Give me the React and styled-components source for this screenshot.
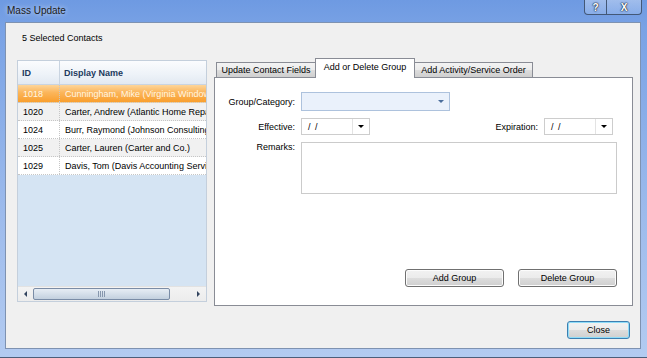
import React from 'react'
import styled, { createGlobalStyle } from 'styled-components'

const Global = createGlobalStyle`
  html, body { margin:0; padding:0; }
  body {
    width:647px;
    height:358px;
    overflow:hidden;
    font-family:"Liberation Sans", Arial, sans-serif;
    font-size:9px;
    color:#000;
  }
`

const Frame = styled.div`
  width:647px;
  height:358px;
  box-sizing:border-box;
  display:flex;
  flex-direction:column;
  padding:0 6px 8px 5px;
  background:linear-gradient(180deg, #6e9ae2 0%, #79a2e5 8%, #9dbbec 60%, #b3cbf1 100%);
  border-bottom:1px solid #4c5e7a;
`

const TitleBar = styled.div`
  height:22px;
  display:flex;
  justify-content:space-between;
  align-items:flex-start;
  flex-shrink:0;
`

const Title = styled.div`
  padding:5px 0 0 2px;
  font-size:10px;
  line-height:12px;
  color:#1b1b1b;
  text-shadow:0 0 5px rgba(255,255,255,0.8);
`

const Captions = styled.div`
  display:flex;
  margin-right:-1px;
`

const CaptionBtn = styled.div`
  width:${p => p.$w}px;
  height:15px;
  box-sizing:border-box;
  border:1px solid #435877;
  border-top:none;
  border-left:${p => (p.$first ? '1px solid #435877' : 'none')};
  border-radius:${p => (p.$first ? '0 0 0 4px' : '0 0 4px 0')};
  background:linear-gradient(180deg, rgba(255,255,255,0.35), rgba(200,220,250,0.25));
  display:flex;
  align-items:center;
  justify-content:center;
  color:#fff;
  font-weight:bold;
  font-size:10px;
  text-shadow:0 0 1px #1e2b40, 0 0 1px #1e2b40, 0 0 2px #1e2b40;
`

const Client = styled.div`
  flex:1;
  display:flex;
  flex-direction:column;
  box-sizing:border-box;
  background:#f0f0f0;
  border:1px solid #7e92b1;
  padding:9px 7px 0 11px;
`

const Heading = styled.div`
  line-height:12px;
  margin-bottom:14px;
  padding-left:5px;
`

const MainRow = styled.div`
  display:flex;
  align-items:flex-start;
  gap:7px;
`

const ListBox = styled.div`
  width:190px;
  height:242px;
  margin-top:2px;
  box-sizing:border-box;
  border:1px solid #c4cfdc;
  background:#d5e4f3;
  display:flex;
  flex-direction:column;
  overflow:hidden;
`

const HeaderRow = styled.div`
  display:grid;
  grid-template-columns:42px 1fr;
  height:23px;
  background:linear-gradient(180deg, #fbfcfe 0%, #edf2f8 60%, #e2e9f2 100%);
  border-bottom:1px solid #c9d4e1;
  flex-shrink:0;
`

const HeadCell = styled.div`
  display:flex;
  align-items:center;
  padding-left:4px;
  font-weight:bold;
  color:#223a5e;
  border-right:${p => (p.$divider ? '1px solid #c9d4e1' : 'none')};
`

const Row = styled.div`
  display:grid;
  grid-template-columns:42px 1fr;
  height:18px;
  box-sizing:border-box;
  border-bottom:1px dotted #c6c6c6;
  background:${p =>
    p.$selected
      ? 'linear-gradient(180deg, #fdd59a 0%, #fbb55a 45%, #f99f2e 100%)'
      : p.$alt
      ? '#f1f1f1'
      : '#ffffff'};
  color:${p => (p.$selected ? '#fff6e4' : '#000')};
`

const Cell = styled.div`
  display:flex;
  align-items:center;
  padding-left:5px;
  white-space:nowrap;
  overflow:hidden;
  border-right:${p => (p.$divider ? '1px dotted #c6c6c6' : 'none')};
`

const HScroll = styled.div`
  margin-top:auto;
  height:14px;
  display:flex;
  align-items:center;
  background:linear-gradient(180deg, #f3f3f3, #ececec);
  border-top:1px solid #e2e2e2;
  flex-shrink:0;
`

const ArrowBtn = styled.div`
  width:15px;
  height:100%;
  display:flex;
  align-items:center;
  justify-content:center;
  flex-shrink:0;
`

const Track = styled.div`
  flex:1;
  height:100%;
  display:flex;
  align-items:center;
`

const Thumb = styled.div`
  width:137px;
  height:12px;
  box-sizing:border-box;
  border:1px solid #7a8ca6;
  border-radius:2px;
  background:linear-gradient(180deg, #e7edf4 0%, #d5dfea 50%, #c3d0de 100%);
  display:flex;
  align-items:center;
  justify-content:center;
`

const Grip = styled.div`
  width:7px;
  height:6px;
  background:repeating-linear-gradient(90deg, #8797ad 0 1px, transparent 1px 2px);
`

const TabArea = styled.div`
  width:419px;
  display:flex;
  flex-direction:column;
`

const TabStrip = styled.div`
  height:19px;
  display:flex;
  align-items:flex-end;
  padding-left:2px;
`

const Tab = styled.div`
  position:relative;
  z-index:${p => (p.$active ? 2 : 1)};
  box-sizing:border-box;
  height:${p => (p.$active ? '20px' : '15px')};
  margin-bottom:${p => (p.$active ? '-1px' : '0')};
  margin-left:${p => (p.$first ? '0' : '-1px')};
  width:${p => p.$w}px;
  display:flex;
  align-items:center;
  justify-content:center;
  border:1px solid #898c95;
  border-bottom:none;
  background:${p =>
    p.$active
      ? '#ffffff'
      : 'linear-gradient(180deg, #f3f3f3 0%, #ebebeb 50%, #dddddd 51%, #cfcfcf 100%)'};
  padding-bottom:${p => (p.$active ? '3px' : '0')};
  white-space:nowrap;
`

const Panel = styled.div`
  height:229px;
  box-sizing:border-box;
  border:1px solid #898c95;
  background:#fff;
  display:flex;
  flex-direction:column;
  padding:14px 15px 18px 0;
`

const FormRow = styled.div`
  display:flex;
  align-items:${p => (p.$top ? 'flex-start' : 'center')};
  margin-top:${p => p.$mt || 0}px;
  padding-right:${p => p.$pr || 0}px;
`

const Label = styled.div`
  width:${p => p.$w || 80}px;
  text-align:right;
  margin-right:6px;
  flex-shrink:0;
`

const Combo = styled.div`
  width:149px;
  height:19px;
  box-sizing:border-box;
  border:1px solid #adc2dd;
  background:#eaf1fb;
  display:flex;
  align-items:center;
  justify-content:flex-end;
  padding-right:5px;
`

const DateBox = styled.div`
  width:69px;
  height:17px;
  box-sizing:border-box;
  border:1px solid #cdcdcd;
  display:flex;
  background:#fff;
`

const DateText = styled.div`
  flex:1;
  display:flex;
  align-items:center;
  padding-left:6px;
  letter-spacing:1px;
  border-right:1px solid #e3e3e3;
`

const DateBtn = styled.div`
  width:16px;
  display:flex;
  align-items:center;
  justify-content:center;
`

const Spacer = styled.div`
  flex:1;
`

const Remarks = styled.div`
  width:316px;
  height:52px;
  box-sizing:border-box;
  border:1px solid #cbcbcb;
  background:#fff;
`

const ButtonRow = styled.div`
  display:flex;
  justify-content:flex-end;
  gap:14px;
`

const Button = styled.button`
  width:${p => p.$w || 99}px;
  height:18px;
  box-sizing:border-box;
  padding:0;
  font-family:inherit;
  font-size:9px;
  color:#000;
  border:1px solid ${p => (p.$focus ? '#3c7fb1' : '#707070')};
  border-radius:3px;
  background:linear-gradient(180deg, #f2f2f2 0%, #ebebeb 50%, #dddddd 51%, #cfcfcf 100%);
  box-shadow:${p => (p.$focus ? 'inset 0 0 0 1px #8fdcf8' : 'inset 0 0 0 1px #fcfcfc')};
`

const Footer = styled.div`
  display:flex;
  justify-content:flex-end;
  margin-top:15px;
  padding-right:3px;
`

const Tri = ({ dir = 'down', color = '#000', size = 3 }) => {
  const s = size
  const pts =
    dir === 'down'
      ? `0,0 ${s * 2},0 ${s},${s}`
      : dir === 'left'
      ? `${s},0 ${s},${s * 2} 0,${s}`
      : `0,0 0,${s * 2} ${s},${s}`
  const w = dir === 'down' ? s * 2 : s
  const h = dir === 'down' ? s : s * 2
  return (
    <svg width={w} height={h} viewBox={`0 0 ${w} ${h}`}>
      <polygon points={pts} fill={color} />
    </svg>
  )
}

const contacts = [
  { id: '1018', name: 'Cunningham, Mike (Virginia Windows and Doors)' },
  { id: '1020', name: 'Carter, Andrew (Atlantic Home Repair)' },
  { id: '1024', name: 'Burr, Raymond (Johnson Consulting)' },
  { id: '1025', name: 'Carter, Lauren (Carter and Co.)' },
  { id: '1029', name: 'Davis, Tom  (Davis Accounting Services)' },
]

const App = () => {
  return (
    <>
      <Global />
      <Frame>
        <TitleBar>
          <Title>Mass Update</Title>
          <Captions>
            <CaptionBtn $w={23} $first>?</CaptionBtn>
            <CaptionBtn $w={35}>X</CaptionBtn>
          </Captions>
        </TitleBar>
        <Client>
          <Heading>5 Selected Contacts</Heading>
          <MainRow>
            <ListBox>
              <HeaderRow>
                <HeadCell $divider>ID</HeadCell>
                <HeadCell>Display Name</HeadCell>
              </HeaderRow>
              {contacts.map((c, i) => (
                <Row key={c.id} $selected={i === 0} $alt={i % 2 === 1}>
                  <Cell $divider>{c.id}</Cell>
                  <Cell>{c.name}</Cell>
                </Row>
              ))}
              <HScroll>
                <ArrowBtn>
                  <Tri dir="left" color="#33455f" />
                </ArrowBtn>
                <Track>
                  <Thumb>
                    <Grip />
                  </Thumb>
                </Track>
                <ArrowBtn>
                  <Tri dir="right" color="#33455f" />
                </ArrowBtn>
              </HScroll>
            </ListBox>
            <TabArea>
              <TabStrip>
                <Tab $first $w={100}>Update Contact Fields</Tab>
                <Tab $active $w={100}>Add or Delete Group</Tab>
                <Tab $w={119}>Add Activity/Service Order</Tab>
              </TabStrip>
              <Panel>
                <FormRow>
                  <Label>Group/Category:</Label>
                  <Combo>
                    <Tri color="#4b6e9c" />
                  </Combo>
                </FormRow>
                <FormRow $mt={7} $pr={4}>
                  <Label>Effective:</Label>
                  <DateBox>
                    <DateText>/ /</DateText>
                    <DateBtn>
                      <Tri />
                    </DateBtn>
                  </DateBox>
                  <Spacer />
                  <Label $w={60}>Expiration:</Label>
                  <DateBox>
                    <DateText>/ /</DateText>
                    <DateBtn>
                      <Tri />
                    </DateBtn>
                  </DateBox>
                </FormRow>
                <FormRow $mt={7} $top>
                  <Label>Remarks:</Label>
                  <Remarks />
                </FormRow>
                <Spacer />
                <ButtonRow>
                  <Button>Add Group</Button>
                  <Button>Delete Group</Button>
                </ButtonRow>
              </Panel>
            </TabArea>
          </MainRow>
          <Footer>
            <Button $w={63} $focus>Close</Button>
          </Footer>
        </Client>
      </Frame>
    </>
  )
}

export default App
